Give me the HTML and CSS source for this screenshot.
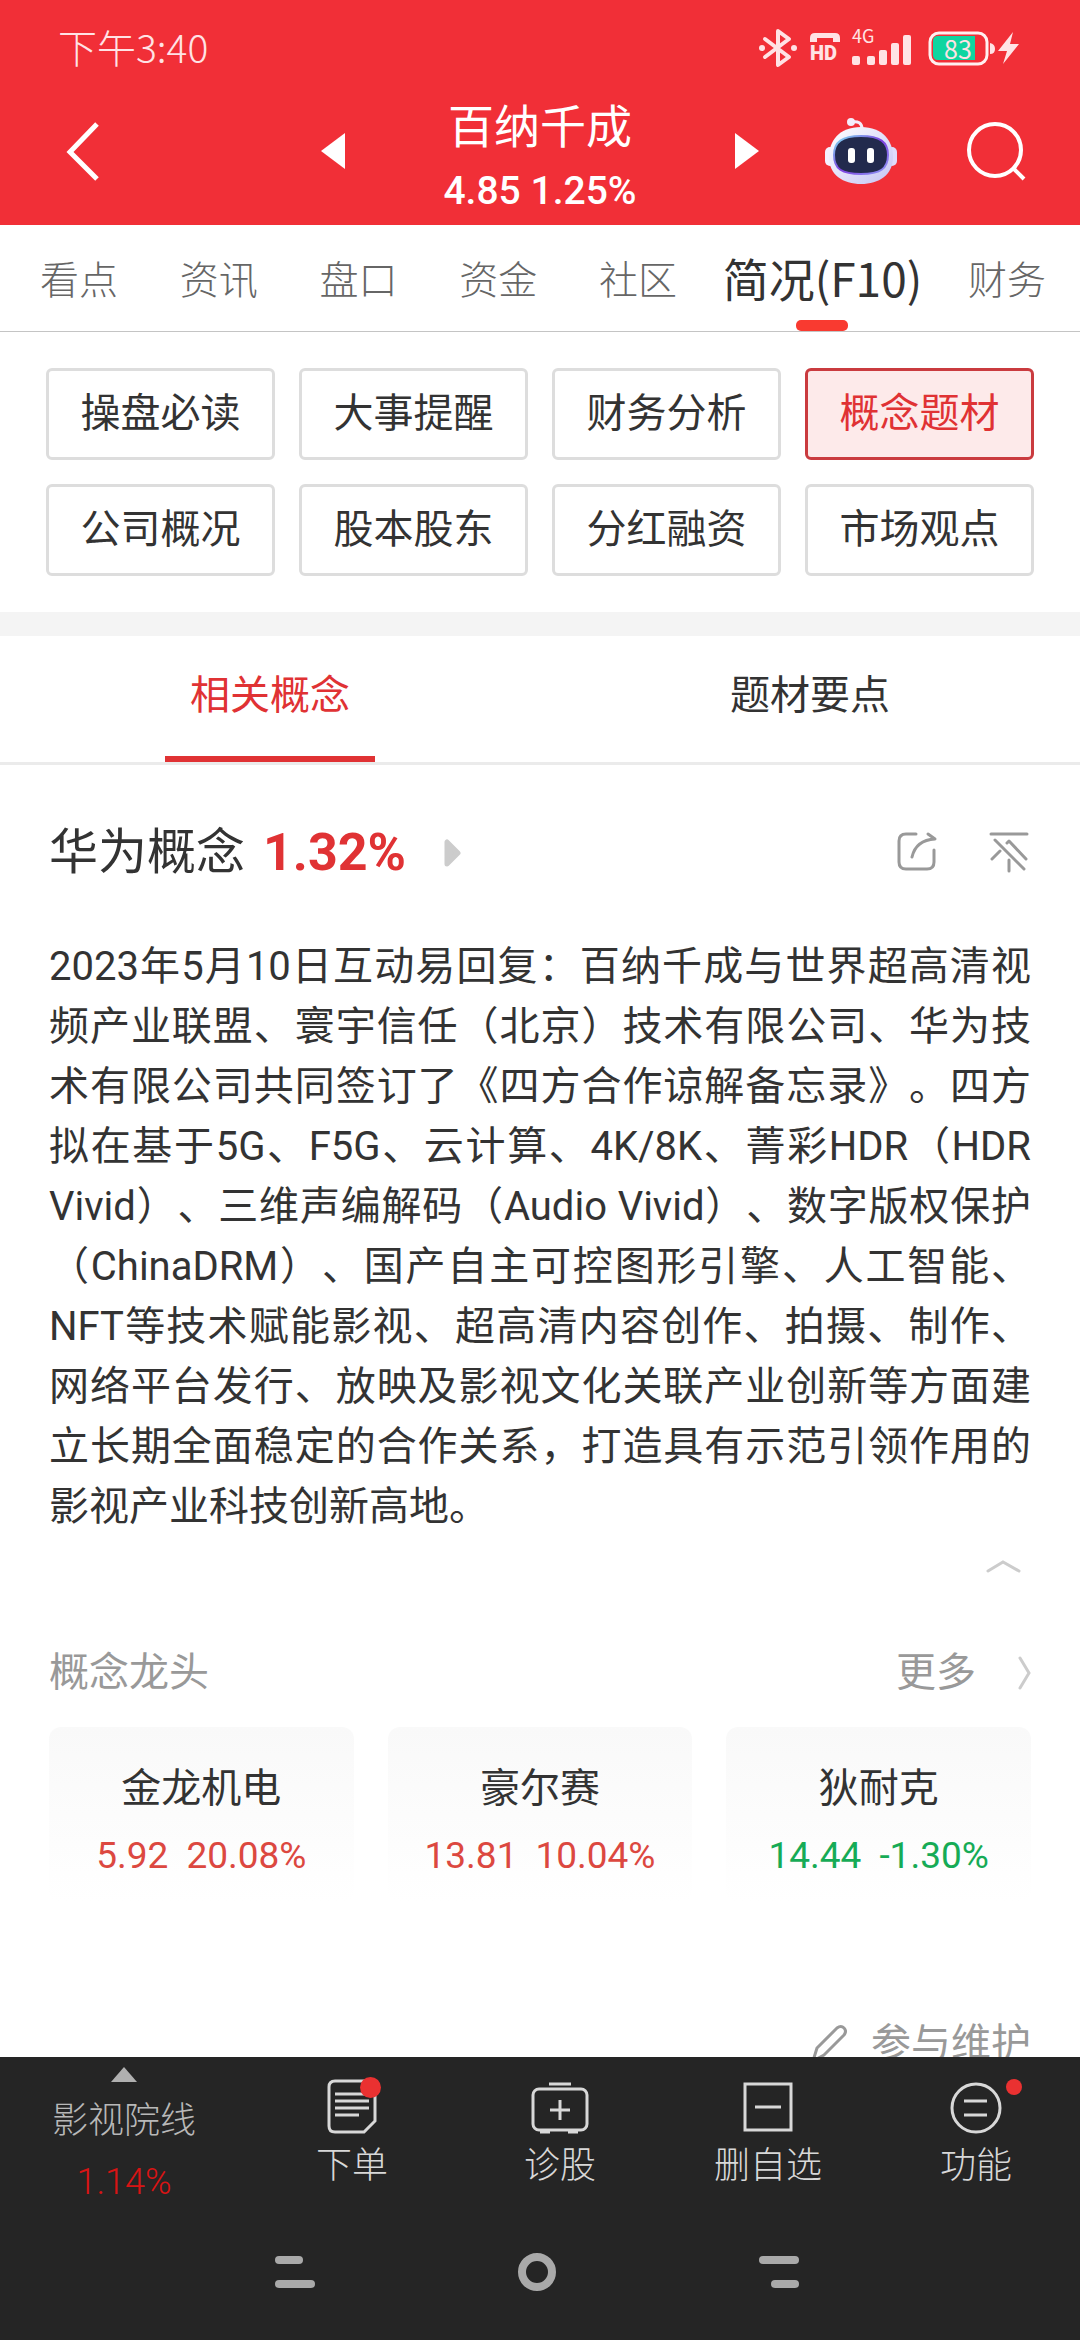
FILE: index.html
```html
<!DOCTYPE html>
<html lang="zh-CN">
    <head>
        <meta charset="UTF-8">
        <meta name="viewport" content="width=device-width, initial-scale=1.0">
        <title>百纳千成</title>
        <link rel="stylesheet" href="styles.css">
    </head>
    <body>
        <header class="top">
            <div class="status">
                <span class="time">下午3:40</span>
                <div class="status-icons">
                    <svg class="bt" width="40" height="40" viewBox="0 0 40 40">
                        <path d="M7 11L31 29L20 37V3L31 11L7 29" fill="none" stroke="#ffe3e5" stroke-width="4" stroke-linejoin="round" stroke-linecap="round"/>
                        <circle cx="4" cy="20" r="3" fill="#ffe3e5"/>
                        <circle cx="36" cy="20" r="3" fill="#ffe3e5"/>
                    </svg>
                    <span class="volte">
                        <svg width="30" height="10" viewBox="0 0 30 10"><path d="M0 9V5Q0 0 5 0H25Q30 0 30 5V9H23V5H7V9Z" fill="#ffe3e5"/></svg>
                        <b>HD</b>
                    </span>
                    <span class="signal">
                        <small>4G</small>
                        <svg width="60" height="30" viewBox="0 0 60 30" fill="#ffe3e5">
                            <rect x="0" y="21" width="8" height="9" rx="2"/>
                            <rect x="15" y="21" width="8" height="9" rx="2"/>
                            <rect x="27" y="15" width="8" height="15" rx="2"/>
                            <rect x="39" y="8" width="8" height="22" rx="2"/>
                            <rect x="51" y="0" width="8" height="30" rx="2"/>
                        </svg>
                    </span>
                    <span class="battery">
                        <svg width="92" height="36" viewBox="0 0 92 36">
                            <rect x="2" y="3" width="57" height="31" rx="9" fill="none" stroke="#fff0f0" stroke-width="3"/>
                            <path d="M10 6H47V30H10Q5 30 5 25V11Q5 6 10 6Z" fill="#0fd5a0"/>
                            <path d="M62 13Q67 14 67 19T62 24Z" fill="#ffe3e5"/>
                            <path d="M85 2L70 21H79L75 34L91 14H82Z" fill="#ffe3e5"/>
                        </svg>
                        <span class="level">83</span>
                    </span>
                </div>
            </div>
            <div class="title-bar">
                <button class="back" aria-label="返回">
                    <svg width="34" height="60" viewBox="0 0 34 60"><path d="M31 3L4 31L31 58" fill="none" stroke="#fff" stroke-width="5"/></svg>
                </button>
                <div class="stock">
                    <button aria-label="上一只"><svg width="24" height="36" viewBox="0 0 24 36"><path d="M24 0V36L0 18Z" fill="#fff"/></svg></button>
                    <div class="stock-name">
                        <h1>百纳千成</h1>
                        <p>4.85 1.25%</p>
                    </div>
                    <button aria-label="下一只"><svg width="24" height="36" viewBox="0 0 24 36"><path d="M0 0V36L24 18Z" fill="#fff"/></svg></button>
                </div>
                <div class="tools">
                    <button aria-label="助手">
                        <svg width="72" height="68" viewBox="0 0 72 68">
                            <defs>
                                <linearGradient id="head" x1="0" y1="0" x2="1" y2="1"><stop offset="0" stop-color="#fff"/><stop offset="1" stop-color="#c5c4f4"/></linearGradient>
                                <linearGradient id="rim" x1="0" y1="0" x2="1" y2="1"><stop offset="0" stop-color="#7fe3f0"/><stop offset="0.5" stop-color="#7d3fe0"/><stop offset="1" stop-color="#8f9bf5"/></linearGradient>
                            </defs>
                            <path d="M26 5Q37 3 37 12" fill="none" stroke="#f4ecfa" stroke-width="3"/>
                            <circle cx="26" cy="5" r="4" fill="#f4ecfa"/>
                            <rect x="0" y="30" width="10" height="19" rx="5" fill="#f5f0ff"/>
                            <rect x="62" y="30" width="10" height="19" rx="5" fill="#dfdcfb"/>
                            <path d="M36 10C58 10 68 24 68 40C68 58 54 67 36 67C18 67 4 58 4 40C4 24 14 10 36 10Z" fill="url(#head)"/>
                            <path d="M36 19C55 19 63 25 63 38C63 52 55 57 36 57C17 57 9 52 9 38C9 25 17 19 36 19Z" fill="#222a4d" stroke="url(#rim)" stroke-width="2"/>
                            <rect x="23" y="31" width="7" height="15" rx="3" fill="#fff"/>
                            <rect x="42" y="31" width="7" height="15" rx="3" fill="#fff"/>
                        </svg>
                    </button>
                    <button aria-label="搜索">
                        <svg width="60" height="60" viewBox="0 0 60 60" fill="none" stroke="#fff" stroke-width="4"><circle cx="29" cy="29" r="26"/><path d="M47 47L58 58"/></svg>
                    </button>
                </div>
            </div>
        </header>

        <nav class="tabs">
            <a href="#">看点</a>
            <a href="#">资讯</a>
            <a href="#">盘口</a>
            <a href="#">资金</a>
            <a href="#">社区</a>
            <a href="#" class="active">简况(F10)</a>
            <a href="#">财务</a>
        </nav>

        <main>
            <div class="sections">
                <button>操盘必读</button>
                <button>大事提醒</button>
                <button>财务分析</button>
                <button class="active">概念题材</button>
                <button>公司概况</button>
                <button>股本股东</button>
                <button>分红融资</button>
                <button>市场观点</button>
            </div>

            <div class="subtabs">
                <a href="#" class="active">相关概念</a>
                <a href="#">题材要点</a>
            </div>

            <article class="concept">
                <div class="concept-head">
                    <h2>华为概念</h2>
                    <strong>1.32%</strong>
                    <svg width="17" height="28" viewBox="0 0 17 28"><path d="M3 3V25L14 14Z" fill="#ccc" stroke="#ccc" stroke-width="5" stroke-linejoin="round"/></svg>
                    <div class="concept-tools">
                        <button aria-label="分享">
                            <svg width="40" height="40" viewBox="0 0 40 40" fill="none" stroke="#999" stroke-width="3" stroke-linecap="round" stroke-linejoin="round">
                                <path d="M19 2H9Q2 2 2 9V30Q2 37 9 37H30Q37 37 37 30V18"/>
                                <path d="M15 25Q19 8 38 7L31 2"/>
                            </svg>
                        </button>
                        <button aria-label="取消置顶">
                            <svg width="40" height="42" viewBox="0 0 40 42" fill="none" stroke="#999" stroke-width="3" stroke-linecap="round" stroke-linejoin="round">
                                <path d="M2 3H38M6 9L35 38M20 29V40M3 28L11 20M18 12L20 10L37 28"/>
                            </svg>
                        </button>
                    </div>
                </div>
                <p class="text">2023年5月10日互动易回复：百纳千成与世界超高清视频产业联盟、寰宇信任（北京）技术有限公司、华为技术有限公司共同签订了《四方合作谅解备忘录》。四方拟在基于5G、F5G、云计算、4K/8K、菁彩HDR（HDR Vivid）、三维声编解码（Audio Vivid）、数字版权保护（ChinaDRM）、国产自主可控图形引擎、人工智能、NFT等技术赋能影视、超高清内容创作、拍摄、制作、网络平台发行、放映及影视文化关联产业创新等方面建立长期全面稳定的合作关系，打造具有示范引领作用的影视产业科技创新高地。</p>
                <button class="fold" aria-label="收起">
                    <svg width="35" height="14" viewBox="0 0 35 14"><path d="M2 12L17 3L33 12" fill="none" stroke="#ccc" stroke-width="3" stroke-linecap="round"/></svg>
                </button>

                <div class="leader-head">
                    <h3>概念龙头</h3>
                    <a href="#">更多
                        <svg width="13" height="34" viewBox="0 0 13 34"><path d="M2 2L11 17L2 32" fill="none" stroke="#ccc" stroke-width="3" stroke-linecap="round"/></svg>
                    </a>
                </div>
                <div class="leaders">
                    <a href="#" class="card up"><span>金龙机电</span><em><i>5.92</i><i>20.08%</i></em></a>
                    <a href="#" class="card up"><span>豪尔赛</span><em><i>13.81</i><i>10.04%</i></em></a>
                    <a href="#" class="card down"><span>狄耐克</span><em><i>14.44</i><i>-1.30%</i></em></a>
                </div>
                <a href="#" class="maintain">
                    <svg width="36" height="40" viewBox="0 0 36 40"><path d="M2 37L6 24L26 4Q30 1 33 4T33 11L13 31Z" fill="none" stroke="#999" stroke-width="3" stroke-linejoin="round"/></svg>
                    参与维护
                </a>
            </article>
        </main>

        <footer class="bottom">
            <nav class="actions">
                <a href="#" class="plate">
                    <svg width="26" height="15" viewBox="0 0 26 15"><path d="M13 0L26 15H0Z" fill="#b0b0b0"/></svg>
                    <span>影视院线</span>
                    <em>1.14%</em>
                </a>
                <a href="#">
                    <svg width="56" height="56" viewBox="0 0 56 56">
                        <path d="M11 2H45Q51 2 51 8V42L40 53H11Q5 53 5 47V8Q5 2 11 2Z" fill="none" stroke="#d8d8d8" stroke-width="3"/>
                        <path d="M11 15H45M11 22H45M11 29H45M11 36H35" stroke="#d8d8d8" stroke-width="3"/>
                    </svg>
                    <i class="dot dot-big"></i>
                    <span>下单</span>
                </a>
                <a href="#">
                    <svg width="60" height="56" viewBox="0 0 60 56" fill="none" stroke="#d8d8d8" stroke-width="3">
                        <rect x="3" y="10" width="54" height="41" rx="6"/>
                        <path d="M19 5H41M20 31H40M30 21V41M10 53H20M38 53H48"/>
                    </svg>
                    <span>诊股</span>
                </a>
                <a href="#">
                    <svg width="56" height="56" viewBox="0 0 56 56" fill="none" stroke="#d8d8d8" stroke-width="3">
                        <rect x="5" y="5" width="46" height="46"/>
                        <path d="M15 28H41"/>
                    </svg>
                    <span>删自选</span>
                </a>
                <a href="#">
                    <svg width="56" height="56" viewBox="0 0 56 56" fill="none" stroke="#d8d8d8" stroke-width="3">
                        <circle cx="28" cy="29" r="24"/>
                        <path d="M16 22H39M16 36H39"/>
                    </svg>
                    <i class="dot"></i>
                    <span>功能</span>
                </a>
            </nav>
            <div class="sysnav">
                <button aria-label="菜单"><svg width="40" height="40" viewBox="0 0 40 40" fill="#a9a9a9"><rect y="4" width="28" height="8" rx="4"/><rect y="28" width="40" height="8" rx="4"/></svg></button>
                <button aria-label="主页"><svg width="40" height="40" viewBox="0 0 40 40"><circle cx="20" cy="20" r="15" fill="none" stroke="#a9a9a9" stroke-width="8"/></svg></button>
                <button aria-label="后退"><svg width="40" height="40" viewBox="0 0 40 40" fill="#a9a9a9"><rect y="4" width="40" height="8" rx="4"/><rect x="12" y="28" width="28" height="8" rx="4"/></svg></button>
            </div>
        </footer>
    </body>
</html>
```

FILE: styles.css
```css
*{
    box-sizing:border-box;
    margin:0;
    padding:0;
}
body{
    display:flex;
    flex-direction:column;
    height:100vh;
    background:white;
    color:#333;
    font-family:Roboto,"Noto Sans CJK SC",sans-serif;
    font-size:40px;
    line-height:60px;
}
a{
    color:inherit;
    text-decoration:none;
}
button{
    border:none;
    background:transparent;
    color:inherit;
    font:inherit;
    cursor:pointer;
}
svg{
    display:block;
}
h1,h2,h3{
    font-weight:400;
}
em,i{
    font-style:normal;
}

/* red header */
.top{
    flex:none;
    background:#f12f37;
    color:white;
}
.status{
    display:flex;
    justify-content:space-between;
    align-items:center;
    height:96px;
    padding:0 60px 0 58px;
    font-family:"Noto Sans CJK SC",sans-serif;
    font-size:36px;
    color:#ffe3e5;
}
.time{
    padding-bottom:4px;
    font-weight:300;
    font-size:39px;
}
.status-icons{
    display:flex;
    align-items:center;
    gap:12px;
}
.volte b{
    display:block;
    font:900 20px/20px Roboto,sans-serif;
}
.signal{
    position:relative;
    padding-top:4px;
}
.signal small{
    position:absolute;
    left:0;
    top:-6px;
    font-size:18px;
    line-height:20px;
}
.battery{
    position:relative;
    margin-left:4px;
}
.level{
    position:absolute;
    left:16px;
    top:4px;
    font-size:25px;
    line-height:28px;
}
.title-bar{
    display:grid;
    grid-template-columns:1fr auto 1fr;
    align-items:center;
    height:129px;
    padding:0 54px 20px 66px;
}
.back{
    justify-self:start;
}
.stock{
    display:flex;
    align-items:center;
    gap:76px;
    height:109px;
    margin:0 6px 0 -6px;
}
.stock-name{
    width:238px;
    padding-top:16px;
    text-align:center;
    white-space:nowrap;
}
.stock-name h1{
    font-size:46px;
    line-height:64px;
}
.stock-name p{
    font-weight:500;
    font-size:39px;
    line-height:64px;
}
.tools{
    display:flex;
    justify-content:flex-end;
    align-items:center;
    gap:69px;
}

/* page tabs */
.tabs{
    flex:none;
    display:flex;
    justify-content:space-between;
    align-items:center;
    height:107px;
    padding:0 34px 2px 40px;
    border-bottom:1px solid #c4c4c4;
    font-family:"Noto Sans CJK SC",sans-serif;
    font-weight:300;
    font-size:39px;
    color:#666;
    white-space:nowrap;
}
.tabs .active{
    position:relative;
    margin:0 -16px;
    font-weight:400;
    font-size:46px;
    line-height:104px;
    color:#333;
}
.tabs .active::after{
    content:"";
    position:absolute;
    left:50%;
    bottom:-2px;
    width:52px;
    height:11px;
    margin-left:-26px;
    border-radius:5px;
    background:#f93a30;
}

main{
    flex:1;
    min-height:0;
    overflow:hidden;
}
.sections{
    display:grid;
    grid-template-columns:repeat(4,1fr);
    gap:24px;
    padding:36px 46px;
    border-bottom:24px solid #f4f4f4;
}
.sections button{
    height:92px;
    border:3px solid #ddd;
    border-radius:6px;
}
.sections .active{
    border-color:#ca3b3f;
    background:#fdeaea;
    color:#e03234;
}
.subtabs{
    display:flex;
    border-bottom:3px solid #ebebeb;
}
.subtabs a{
    flex:1;
    display:flex;
    flex-direction:column;
    align-items:center;
    height:126px;
    padding-top:30px;
}
.subtabs .active{
    color:#e03234;
}
.subtabs .active::after{
    content:"";
    width:210px;
    height:6px;
    margin-top:auto;
    background:#e03234;
}

/* concept block */
.concept{
    padding:52px 49px 0;
}
.concept-head{
    display:flex;
    align-items:center;
    height:72px;
}
.concept-head h2{
    font-size:49px;
}
.concept-head strong{
    margin:0 38px 0 18px;
    font-size:52px;
    color:#e03234;
}
.concept-tools{
    display:flex;
    gap:52px;
    margin:0 2px 2px auto;
}
.text{
    margin-top:48px;
    text-align:justify;
    text-spacing-trim:space-all;
}
.fold{
    display:block;
    margin:22px 10px 0 auto;
}
.leader-head{
    display:flex;
    justify-content:space-between;
    margin-top:70px;
    color:#999;
}
.leader-head h3{
    font-size:40px;
}
.leader-head a{
    display:flex;
    align-items:center;
    gap:42px;
}
.leaders{
    display:grid;
    grid-template-columns:repeat(3,1fr);
    gap:34px;
    margin-top:24px;
}
.card{
    display:flex;
    flex-direction:column;
    align-items:center;
    height:176px;
    padding-top:32px;
    border-radius:12px;
    background:linear-gradient(#f9f9f9,#fff);
}
.card em{
    display:flex;
    gap:18px;
    margin-top:7px;
    font-size:37px;
}
.up em{
    color:#dc4840;
}
.down em{
    color:#16ab56;
}
.maintain{
    display:flex;
    justify-content:flex-end;
    align-items:center;
    gap:24px;
    margin-top:111px;
    color:#999;
}

/* bottom bar */
.bottom{
    flex:none;
    background:#252525;
    color:#d8d8d8;
    font-family:"Noto Sans CJK SC",sans-serif;
    font-weight:300;
    font-size:36px;
}
.actions{
    display:grid;
    grid-template-columns:248px repeat(4,1fr);
    height:150px;
}
.actions a{
    position:relative;
    display:flex;
    flex-direction:column;
    align-items:center;
    padding-top:22px;
}
.actions span{
    line-height:54px;
}
.actions .plate{
    padding-top:10px;
    color:#b8b8b8;
}
.plate span{
    margin-top:8px;
}
.plate em{
    margin-top:8px;
    font-family:Roboto,sans-serif;
    line-height:60px;
    color:#d81414;
}
.dot{
    position:absolute;
    left:50%;
    top:22px;
    width:16px;
    height:16px;
    margin-left:30px;
    border-radius:50%;
    background:#ea3131;
}
.dot-big{
    top:20px;
    width:21px;
    height:21px;
    margin-left:8px;
}
.sysnav{
    display:flex;
    justify-content:center;
    gap:202px;
    padding:45px 6px 48px 0;
}
```
